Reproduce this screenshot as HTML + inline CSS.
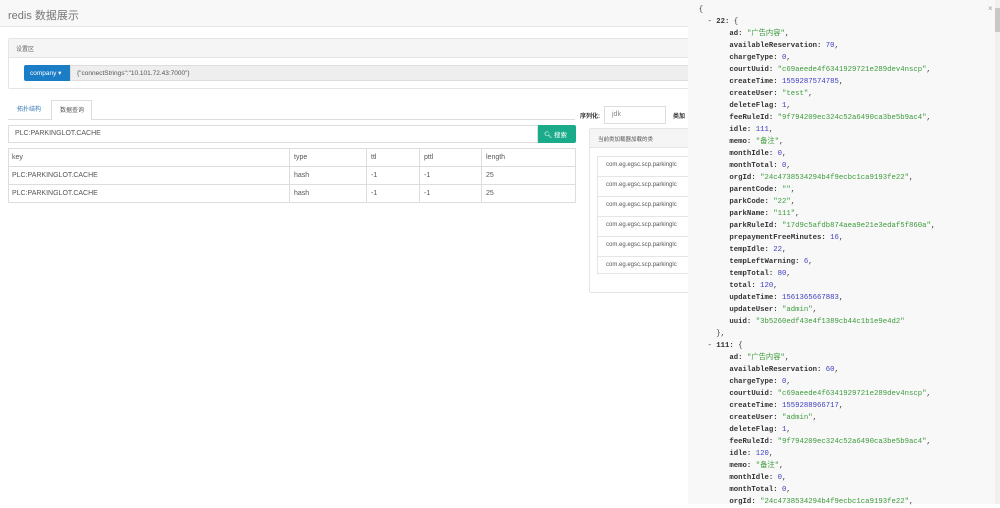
<!DOCTYPE html>
<html><head><meta charset="utf-8"><style>
*{box-sizing:border-box;margin:0;padding:0}
body{width:1000px;height:504px;overflow:hidden;background:#fff;font-family:"Liberation Sans","Noto Sans CJK SC",sans-serif;color:#555;position:relative}
.a{position:absolute}
.hdr{left:0;top:0;width:1000px;height:27px;background:#f8f8f8;border-bottom:1px solid #e7e7e7;font-size:11px;color:#777;padding:7px 0 0 8px}
.td{position:absolute;font-size:7px;color:#555}
.json{left:688px;top:0;width:312px;height:504px;background:#f8f8f8;font-family:"Liberation Mono","Noto Sans CJK SC",monospace;font-size:7.3px;line-height:12px;color:#333;padding-top:4px}
.json div{white-space:pre;height:12px}
.k{font-weight:bold;color:#333}
.n{color:#3c3cc0}
.s{color:#3a9a3a}
</style></head><body>
<div class="a hdr">redis 数据展示</div>
<div class="a" style="left:8px;top:38px;width:700px;height:51px;border:1px solid #e5e5e5;border-radius:2px"></div>
<div class="a" style="left:9px;top:39px;width:700px;height:19px;background:#f5f5f5;border-bottom:1px solid #e5e5e5;font-size:6px;padding:5px 0 0 7px;color:#666">设置区</div>
<div class="a" style="left:24px;top:65px;width:46px;height:16px;background:#1c7dc7;color:#fff;font-size:6.5px;padding:4px 0 0 6px;border-radius:2px 0 0 2px">company ▾</div>
<div class="a" style="left:70px;top:65px;width:630px;height:16px;background:#eee;border:1px solid #ddd;font-size:6.5px;padding:4px 0 0 6px">{"connectStrings":"10.101.72.43:7000"}</div>
<div class="a" style="left:8px;top:119px;width:567px;height:1px;background:#ddd"></div>
<div class="a" style="left:17px;top:104px;font-size:6px;color:#337ab7">拓扑结构</div>
<div class="a" style="left:51px;top:100px;width:41px;height:20px;border:1px solid #ddd;border-bottom:none;background:#fff;font-size:6px;padding:4px 0 0 8px">数据查询</div>
<div class="a" style="left:8px;top:125px;width:530px;height:18px;border:1px solid #ddd;font-size:7px;padding:4px 0 0 6px">PLC:PARKINGLOT.CACHE</div>
<div class="a" style="left:538px;top:125px;width:38px;height:18px;background:#1aab8a;color:#fff;font-size:6.5px;padding:4px 0 0 6px;border-radius:0 2px 2px 0">🔍︎ 搜索</div>
<div class="a" style="left:8px;top:148px;width:568px;height:55px;border:1px solid #ddd"></div>
<div class="a" style="left:8px;top:166px;width:568px;height:1px;background:#ddd"></div>
<div class="a" style="left:8px;top:184px;width:568px;height:1px;background:#ddd"></div>
<div class="a" style="left:289px;top:148px;width:1px;height:55px;background:#ddd"></div>
<div class="a" style="left:366px;top:148px;width:1px;height:55px;background:#ddd"></div>
<div class="a" style="left:419px;top:148px;width:1px;height:55px;background:#ddd"></div>
<div class="a" style="left:481px;top:148px;width:1px;height:55px;background:#ddd"></div>
<div class="td" style="left:12px;top:154px">key</div><div class="td" style="left:294px;top:154px">type</div><div class="td" style="left:371px;top:154px">ttl</div><div class="td" style="left:424px;top:154px">pttl</div><div class="td" style="left:486px;top:154px">length</div>
<div class="td" style="left:12px;top:172px">PLC:PARKINGLOT.CACHE</div><div class="td" style="left:294px;top:172px">hash</div><div class="td" style="left:371px;top:172px">-1</div><div class="td" style="left:424px;top:172px">-1</div><div class="td" style="left:486px;top:172px">25</div>
<div class="td" style="left:12px;top:190px">PLC:PARKINGLOT.CACHE</div><div class="td" style="left:294px;top:190px">hash</div><div class="td" style="left:371px;top:190px">-1</div><div class="td" style="left:424px;top:190px">-1</div><div class="td" style="left:486px;top:190px">25</div>
<div class="a" style="left:580px;top:111px;font-size:6px;font-weight:bold;color:#333">序列化:</div>
<div class="a" style="left:604px;top:106px;width:62px;height:18px;border:1px solid #ddd;font-size:7px;padding:4px 0 0 7px;color:#888">jdk</div>
<div class="a" style="left:673px;top:111px;font-size:6px;font-weight:bold;color:#333">类加</div>
<div class="a" style="left:589px;top:128px;width:120px;height:165px;border:1px solid #e5e5e5;border-radius:2px"></div>
<div class="a" style="left:590px;top:129px;width:100px;height:19px;background:#f5f5f5;border-bottom:1px solid #e5e5e5;font-size:5.5px;padding:6px 0 0 8px">当前类加载器加载的类</div>
<div class="a" style="left:597px;top:156px;width:100px;height:118px;border:1px solid #e5e5e5"></div>
<div class="td" style="left:606px;top:162px;font-size:6px">com.eg.egsc.scp.parkinglc</div>
<div class="a" style="left:597px;top:176px;width:100px;height:1px;background:#e5e5e5"></div>
<div class="td" style="left:606px;top:182px;font-size:6px">com.eg.egsc.scp.parkinglc</div>
<div class="a" style="left:597px;top:196px;width:100px;height:1px;background:#e5e5e5"></div>
<div class="td" style="left:606px;top:202px;font-size:6px">com.eg.egsc.scp.parkinglc</div>
<div class="a" style="left:597px;top:216px;width:100px;height:1px;background:#e5e5e5"></div>
<div class="td" style="left:606px;top:222px;font-size:6px">com.eg.egsc.scp.parkinglc</div>
<div class="a" style="left:597px;top:236px;width:100px;height:1px;background:#e5e5e5"></div>
<div class="td" style="left:606px;top:242px;font-size:6px">com.eg.egsc.scp.parkinglc</div>
<div class="a" style="left:597px;top:256px;width:100px;height:1px;background:#e5e5e5"></div>
<div class="td" style="left:606px;top:262px;font-size:6px">com.eg.egsc.scp.parkinglc</div>

<div class="a json" style="padding-left:2px">
<div>  {</div>
<div>    - <span class="k">22:</span> {</div>
<div>         <span class="k">ad:</span> <span class="s">"广告内容"</span>,</div>
<div>         <span class="k">availableReservation:</span> <span class="n">70</span>,</div>
<div>         <span class="k">chargeType:</span> <span class="n">0</span>,</div>
<div>         <span class="k">courtUuid:</span> <span class="s">"c69aeede4f6341929721e289dev4nscp"</span>,</div>
<div>         <span class="k">createTime:</span> <span class="n">1559287574785</span>,</div>
<div>         <span class="k">createUser:</span> <span class="s">"test"</span>,</div>
<div>         <span class="k">deleteFlag:</span> <span class="n">1</span>,</div>
<div>         <span class="k">feeRuleId:</span> <span class="s">"9f794209ec324c52a6490ca3be5b9ac4"</span>,</div>
<div>         <span class="k">idle:</span> <span class="n">111</span>,</div>
<div>         <span class="k">memo:</span> <span class="s">"备注"</span>,</div>
<div>         <span class="k">monthIdle:</span> <span class="n">0</span>,</div>
<div>         <span class="k">monthTotal:</span> <span class="n">0</span>,</div>
<div>         <span class="k">orgId:</span> <span class="s">"24c4738534294b4f9ecbc1ca9193fe22"</span>,</div>
<div>         <span class="k">parentCode:</span> <span class="s">""</span>,</div>
<div>         <span class="k">parkCode:</span> <span class="s">"22"</span>,</div>
<div>         <span class="k">parkName:</span> <span class="s">"111"</span>,</div>
<div>         <span class="k">parkRuleId:</span> <span class="s">"17d9c5afdb874aea9e21e3edaf5f860a"</span>,</div>
<div>         <span class="k">prepaymentFreeMinutes:</span> <span class="n">16</span>,</div>
<div>         <span class="k">tempIdle:</span> <span class="n">22</span>,</div>
<div>         <span class="k">tempLeftWarning:</span> <span class="n">6</span>,</div>
<div>         <span class="k">tempTotal:</span> <span class="n">80</span>,</div>
<div>         <span class="k">total:</span> <span class="n">120</span>,</div>
<div>         <span class="k">updateTime:</span> <span class="n">1561365667883</span>,</div>
<div>         <span class="k">updateUser:</span> <span class="s">"admin"</span>,</div>
<div>         <span class="k">uuid:</span> <span class="s">"3b5260edf43e4f1389cb44c1b1e9e4d2"</span></div>
<div>      },</div>
<div>    - <span class="k">111:</span> {</div>
<div>         <span class="k">ad:</span> <span class="s">"广告内容"</span>,</div>
<div>         <span class="k">availableReservation:</span> <span class="n">60</span>,</div>
<div>         <span class="k">chargeType:</span> <span class="n">0</span>,</div>
<div>         <span class="k">courtUuid:</span> <span class="s">"c69aeede4f6341929721e289dev4nscp"</span>,</div>
<div>         <span class="k">createTime:</span> <span class="n">1559288966717</span>,</div>
<div>         <span class="k">createUser:</span> <span class="s">"admin"</span>,</div>
<div>         <span class="k">deleteFlag:</span> <span class="n">1</span>,</div>
<div>         <span class="k">feeRuleId:</span> <span class="s">"9f794209ec324c52a6490ca3be5b9ac4"</span>,</div>
<div>         <span class="k">idle:</span> <span class="n">120</span>,</div>
<div>         <span class="k">memo:</span> <span class="s">"备注"</span>,</div>
<div>         <span class="k">monthIdle:</span> <span class="n">0</span>,</div>
<div>         <span class="k">monthTotal:</span> <span class="n">0</span>,</div>
<div>         <span class="k">orgId:</span> <span class="s">"24c4738534294b4f9ecbc1ca9193fe22"</span>,</div>
</div>
<div class="a" style="left:988px;top:4px;font-size:8px;color:#999">×</div>
<div class="a" style="left:995px;top:0;width:5px;height:504px;background:#f0f0f0"></div>
<div class="a" style="left:995px;top:8px;width:5px;height:24px;background:#c8c8c8"></div>
</body></html>
